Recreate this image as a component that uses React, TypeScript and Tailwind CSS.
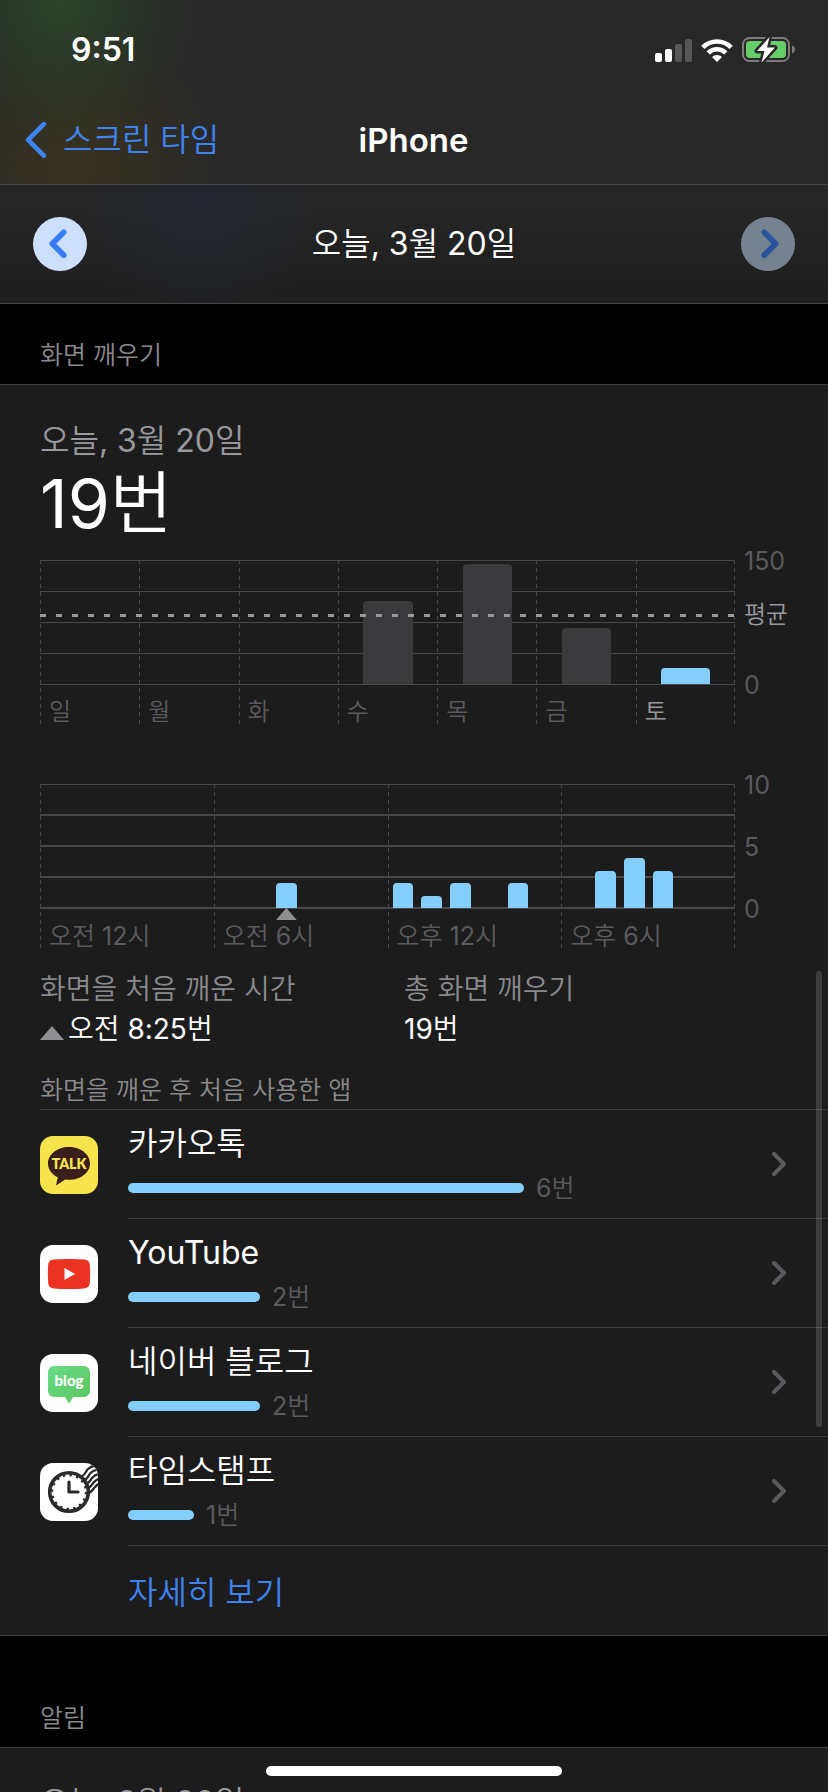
import { ReactNode } from 'react';

interface IDay {
  label: string;
  height: number;
  today?: boolean;
}

interface IAppUsage {
  name: string;
  count: number;
  icon: ReactNode;
}

const WEEK: IDay[] = [
  { label: '일', height: 0 },
  { label: '월', height: 0 },
  { label: '화', height: 0 },
  { label: '수', height: 67 },
  { label: '목', height: 97 },
  { label: '금', height: 45 },
  { label: '토', height: 13, today: true },
];

// wake-ups per hour, one group for each six hours
const HOURS = [
  { label: '오전 12시', counts: [0, 0, 0, 0, 0, 0] },
  { label: '오전 6시', counts: [0, 0, 2, 0, 0, 0] },
  { label: '오후 12시', counts: [2, 1, 2, 0, 2, 0] },
  { label: '오후 6시', counts: [0, 3, 4, 3, 0, 0] },
];

const MAX_PER_HOUR = 10;
const FIRST_WAKE = { group: 1, hour: 2 };

const DASHED_Y =
  'bg-[repeating-linear-gradient(to_bottom,#48484a_0_4px,transparent_4px_8px)]';
const DASHED_X =
  'bg-[repeating-linear-gradient(to_right,#98989d_0_6px,transparent_6px_16px)]';

function Chevron({ className, left }: { className: string; left?: boolean }) {
  return (
    <svg
      viewBox="0 0 14 24"
      className={className}
      fill="none"
      stroke="currentColor"
      strokeLinecap="round"
      strokeLinejoin="round"
      aria-hidden="true"
    >
      <path d={left ? 'M12 2 2 12l10 10' : 'M2 2l10 10L2 22'} />
    </svg>
  );
}

function Triangle({ className }: { className: string }) {
  return (
    <svg viewBox="0 0 24 14" className={className} preserveAspectRatio="none">
      <path d="M12 0 24 14H0z" fill="#8e8e93" />
    </svg>
  );
}

function SignalIcon() {
  return (
    <svg width="37" height="24" viewBox="0 0 37 24" aria-hidden="true">
      <rect x="0" y="15" width="7" height="9" rx="2" fill="#fff" />
      <rect x="10" y="11" width="7" height="13" rx="2" fill="#fff" />
      <rect x="20" y="6" width="7" height="18" rx="2" fill="#575758" />
      <rect x="30" y="1" width="7" height="23" rx="2" fill="#575758" />
    </svg>
  );
}

function WifiIcon() {
  return (
    <svg width="32" height="24" viewBox="0 0 32 24" aria-hidden="true">
      <g fill="none" stroke="#fff" strokeWidth="4.6">
        <path d="M1.8 9.4a20 20 0 0 1 28.4 0" />
        <path d="M7.2 14.9a12.4 12.4 0 0 1 17.6 0" />
      </g>
      <path d="M16 24l-5-5a7.2 7.2 0 0 1 10 0z" fill="#fff" />
    </svg>
  );
}

function BatteryIcon() {
  return (
    <svg width="54" height="28" viewBox="0 0 54 28" aria-hidden="true">
      <rect
        x="1"
        y="2"
        width="46"
        height="23"
        rx="6.5"
        fill="none"
        stroke="#7d7d7e"
        strokeWidth="2"
      />
      <path d="M50 9.500c4 1.500 4 6.500 0 8z" fill="#7d7d7e" />
      <rect x="4" y="5" width="40" height="17" rx="4" fill="#65ce6a" />
      <path
        d="M27.500 1 15 15h7.500L19.500 26.500 33 11.500h-8z"
        fill="#fff"
        stroke="#282828"
        strokeWidth="5"
        strokeLinejoin="round"
        paintOrder="stroke"
      />
    </svg>
  );
}

function KakaoIcon() {
  return (
    <svg viewBox="0 0 58 58" className="size-full font-['Lato',sans-serif]">
      <rect width="58" height="58" fill="#f7e34c" />
      <path
        d="M29 11c-11.600 0-21 7.300-21 16.400 0 5.900 3.900 11 9.800 13.900L16 49.500l9.200-5.900c1.200.2 2.500.2 3.800.2 11.600 0 21-7.300 21-16.400S40.600 11 29 11z"
        fill="#391e1c"
      />
      <text
        x="29"
        y="33"
        textAnchor="middle"
        fontSize="14"
        fontWeight="800"
        fill="#f7e34c"
      >
        TALK
      </text>
    </svg>
  );
}

function YouTubeIcon() {
  return (
    <svg viewBox="0 0 58 58" className="size-full">
      <rect width="58" height="58" fill="#fff" />
      <path
        d="M14 14.600c8-.8 22-.8 30 0 4 .4 5.500 2 5.800 5.600.5 6 .5 11.600 0 17.600-.3 3.600-1.800 5.200-5.800 5.600-8 .8-22 .8-30 0-4-.4-5.500-2-5.800-5.600-.5-6-.5-11.600 0-17.600.3-3.600 1.800-5.200 5.800-5.600z"
        fill="#ea3323"
      />
      <path d="M24.500 23 35 29l-10.500 6z" fill="#fff" />
    </svg>
  );
}

function BlogIcon() {
  return (
    <svg viewBox="0 0 58 58" className="size-full font-['Lato',sans-serif]">
      <defs>
        <linearGradient id="blog" x1="0" y1="0" x2="1" y2="1">
          <stop offset="0" stopColor="#69dc87" />
          <stop offset="1" stopColor="#5bc65f" />
        </linearGradient>
      </defs>
      <rect width="58" height="58" fill="#fff" />
      <path
        d="M14 12h30a6 6 0 0 1 6 6v19a6 6 0 0 1-6 6h-11l-3 5.300q-1 1.400-2 0L25 43H14a6 6 0 0 1-6-6V18a6 6 0 0 1 6-6z"
        fill="url(#blog)"
      />
      <text
        x="29"
        y="32"
        textAnchor="middle"
        fontSize="15"
        fontWeight="900"
        fill="#fff"
      >
        blog
      </text>
    </svg>
  );
}

function TimestampIcon() {
  return (
    <svg viewBox="0 0 58 58" className="size-full">
      <rect width="58" height="58" fill="#fff" />
      <g fill="none" stroke="#2b2b2b" strokeWidth="2.400">
        <path d="M38 14c7 0 7-5 10-8s6-3 10-4" />
        <path d="M41 17.500c7 0 7-5 9.500-7.500s4-3 8.500-3.500" />
        <path d="M43.500 21.500c6 0 6.500-4.500 9-7s3-3 6.500-3.500" />
        <path d="M46 25.500c5 0 5.500-4 8-6.500s2.500-2.500 5-3" />
        <path d="M47 30c5 0 5.500-3.500 8-6s2-2.500 4-3" />
      </g>
      <circle cx="29" cy="29" r="19.300" fill="#fff" stroke="#2b2b2b" strokeWidth="3.600" />
      <circle
        cx="29"
        cy="29"
        r="17"
        fill="none"
        stroke="#2b2b2b"
        strokeWidth="2.400"
        strokeDasharray="2.400 4.275"
      />
      <path
        d="M29 19v10h9"
        fill="none"
        stroke="#2b2b2b"
        strokeWidth="3.200"
        strokeLinecap="round"
        strokeLinejoin="round"
      />
    </svg>
  );
}

const APPS: IAppUsage[] = [
  { name: '카카오톡', count: 6, icon: <KakaoIcon /> },
  { name: 'YouTube', count: 2, icon: <YouTubeIcon /> },
  { name: '네이버 블로그', count: 2, icon: <BlogIcon /> },
  { name: '타임스탬프', count: 1, icon: <TimestampIcon /> },
];

function StatusBar() {
  return (
    <div className="flex h-[99px] items-center justify-between pt-px pr-[32px] pl-[71px]">
      <span className="text-[32px] leading-[40px] font-semibold">9:51</span>
      <div className="flex items-center gap-[9px]">
        <SignalIcon />
        <WifiIcon />
        <BatteryIcon />
      </div>
    </div>
  );
}

function GridLines({ thick }: { thick?: boolean }) {
  return (
    <div className="absolute inset-x-0 top-0 flex h-[125px] flex-col justify-between">
      {[0, 1, 2, 3, 4].map((line) => (
        <div
          key={line}
          className={thick && line > 0 ? 'h-[2px] bg-[#48484a]' : 'h-px bg-[#48484a]'}
        />
      ))}
    </div>
  );
}

function WeekChart() {
  return (
    <div className="flex">
      <div className="relative flex-1">
        <GridLines />
        <div className="relative grid grid-cols-7">
          {WEEK.map(({ label, height, today }) => (
            <div key={label} className="flex h-[165px]">
              <div className={`w-px ${DASHED_Y}`} />
              <div className="flex-1">
                <div className="flex h-[124px] items-end justify-center">
                  <div
                    className={`w-1/2 rounded-t-[4px] ${today ? 'bg-[#84cefb]' : 'bg-[#3a3a3c]'}`}
                    style={{ height: `${height}%` }}
                  />
                </div>
                <div
                  className={`pt-[13px] pl-2 text-2xl leading-[30px] ${today ? 'text-[#98989d]' : 'text-[#5a5a5e]'}`}
                >
                  {label}
                </div>
              </div>
            </div>
          ))}
        </div>
        <div className={`absolute inset-x-0 top-[54px] h-[3px] ${DASHED_X}`} />
        <div className={`absolute top-0 right-0 h-[165px] w-px ${DASHED_Y}`} />
      </div>
      <div className="flex w-[93px] flex-col pl-[9px] text-[25px] leading-[30px] text-[#5a5a5e]">
        <span className="-mt-[14px]">150</span>
        <span className="mt-[24px] text-2xl leading-[30px] text-[#98989d]">평균</span>
        <span className="mt-[40px]">0</span>
      </div>
    </div>
  );
}

function HourChart() {
  return (
    <div className="flex">
      <div className="relative flex-1">
        <GridLines thick />
        <div className="relative grid grid-cols-4">
          {HOURS.map(({ label, counts }, group) => (
            <div key={label} className="flex h-[165px]">
              <div className={`w-px ${DASHED_Y}`} />
              <div className="flex-1">
                <div className="grid h-[124px] grid-cols-6 items-end">
                  {counts.map((count, hour) => (
                    <div
                      key={hour}
                      className="relative mx-1 rounded-t-[4px] bg-[#84cefb]"
                      style={{ height: `${(count / MAX_PER_HOUR) * 100}%` }}
                    >
                      {group === FIRST_WAKE.group && hour === FIRST_WAKE.hour && (
                        <Triangle className="absolute top-full h-3 w-full" />
                      )}
                    </div>
                  ))}
                </div>
                <div className="pt-[13px] pl-2 text-[25px] leading-[30px] text-[#5a5a5e]">
                  {label}
                </div>
              </div>
            </div>
          ))}
        </div>
        <div className={`absolute top-0 right-0 h-[165px] w-px ${DASHED_Y}`} />
      </div>
      <div className="-mt-[14px] flex h-[154px] w-[93px] flex-col justify-between pl-[9px] text-[25px] leading-[30px] text-[#5a5a5e]">
        <span>10</span>
        <span>5</span>
        <span>0</span>
      </div>
    </div>
  );
}

function AppRow({ name, count, icon }: IAppUsage) {
  return (
    <li className="flex h-[109px] items-center">
      <div className="size-[58px] shrink-0 overflow-hidden rounded-[13px]">{icon}</div>
      <a
        href="#"
        className="ml-[30px] flex h-full flex-1 items-center border-b border-[#3d3d40] pr-[42px]"
      >
        <div className="flex-1">
          <div className="text-[32px] leading-[44px]">{name}</div>
          <div className="flex h-[40px] items-center gap-3 pt-1">
            <div
              className="h-[10px] rounded-full bg-[#84cefb]"
              style={{ width: `${count * 66}px` }}
            />
            <span className="text-[25px] leading-[30px] text-[#5a5a5e]">{count}번</span>
          </div>
        </div>
        <Chevron className="w-[14px] stroke-[4] text-[#5a5a5e]" />
      </a>
    </li>
  );
}

export default function App() {
  return (
    <div className="relative flex h-screen flex-col overflow-hidden bg-black font-['Inter','Noto_Sans_CJK_KR_DemiLight','Noto_Sans_CJK_KR',sans-serif] text-white">
      <div className="shrink-0 bg-[#282828] bg-[radial-gradient(circle_at_60px_0px,#2b4229_0,transparent_140px),radial-gradient(circle_at_70px_165px,#38331f_0,transparent_150px)]">
        <StatusBar />
        <header className="grid h-[86px] grid-cols-3 items-center border-b border-[#464648] pr-[26px] pb-1 pl-[25px]">
          <a href="#" className="flex items-center gap-4 text-[32px] leading-[44px] text-[#3f83f0]">
            <Chevron left className="w-[22px] stroke-[3]" />
            스크린 타임
          </a>
          <h1 className="text-center text-[33px] leading-[44px] font-semibold">iPhone</h1>
        </header>
      </div>
      <div className="flex h-[119px] shrink-0 items-center justify-between border-b border-[#464648] bg-[radial-gradient(circle_at_200px_10px,#22262f_0,transparent_130px),linear-gradient(#272727,#1e1e1e)] px-[33px]">
        <button
          type="button"
          aria-label="이전"
          className="flex size-[54px] items-center justify-center rounded-full bg-[#cce0fc] pr-1 text-[#377cf5]"
        >
          <Chevron left className="w-4 stroke-[5] overflow-visible" />
        </button>
        <span className="text-[32px] leading-[44px]">오늘, 3월 20일</span>
        <button
          type="button"
          aria-label="다음"
          className="flex size-[54px] items-center justify-center rounded-full bg-[#778290] pl-1 text-[#26539a]"
        >
          <Chevron className="w-4 stroke-[5] overflow-visible" />
        </button>
      </div>

      <main className="shrink-0">
        <h2 className="h-[80px] pt-[35px] pl-10 text-[25px] leading-[32px] text-[#8a8a8c]">
          화면 깨우기
        </h2>
        <section className="border-y border-[#3d3d40] bg-[#1c1c1c] pl-10">
          <div className="pt-[34px] text-[32px] leading-[44px] text-[#98989d]">
            오늘, 3월 20일
          </div>
          <div className="text-[68px] leading-[80px]">19번</div>
          <div className="pt-[17px]">
            <WeekChart />
          </div>
          <div className="pt-[59px]">
            <HourChart />
          </div>

          <dl className="grid grid-cols-[364px_1fr] pt-5 text-[28px] leading-[40px]">
            <div>
              <dt className="text-[#8a8a8e]">화면을 처음 깨운 시간</dt>
              <dd className="flex items-center gap-1">
                <Triangle className="mt-2 h-[14px] w-[24px]" />
                오전 8:25번
              </dd>
            </div>
            <div>
              <dt className="text-[#8a8a8e]">총 화면 깨우기</dt>
              <dd>19번</dd>
            </div>
          </dl>

          <h3 className="border-b border-[#3d3d40] pt-[25px] pb-[3px] text-[25px] leading-[32px] text-[#8a8a8c]">
            화면을 깨운 후 처음 사용한 앱
          </h3>
          <ul>
            {APPS.map((app) => (
              <AppRow key={app.name} {...app} />
            ))}
          </ul>
          <a
            href="#"
            className="flex h-[89px] items-center pt-1 pl-[88px] text-[32px] leading-[44px] text-[#3f83f0]"
          >
            자세히 보기
          </a>
        </section>

        <h2 className="h-[111px] pt-[66px] pl-10 text-[25px] leading-[32px] text-[#8a8a8c]">
          알림
        </h2>
        <section className="border-t border-[#3d3d40] bg-[#1c1c1c] pl-10">
          <div className="pt-[33px] text-[32px] leading-[44px] text-[#98989d]">
            오늘, 3월 20일
          </div>
        </section>
      </main>

      <div className="absolute top-[971px] right-[6px] h-[456px] w-[6px] rounded-full bg-white/15" />
      <div className="absolute bottom-4 left-1/2 h-[10px] w-[296px] -translate-x-1/2 rounded-full bg-white" />
    </div>
  );
}
